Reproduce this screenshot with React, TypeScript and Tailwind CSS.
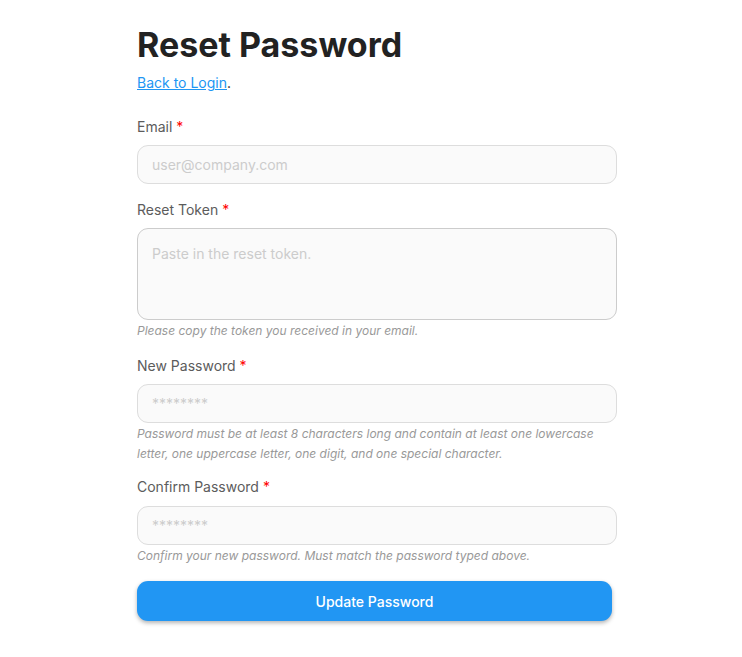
import React from "react";

function Label({ children }: { children: React.ReactNode }) {
  return (
    <label className="block text-[14px] leading-[20px] text-[#5c5c5c]">
      {children} <span className="text-[#f00]">*</span>
    </label>
  );
}

function Hint({ children }: { children: React.ReactNode }) {
  return <p className="mt-[1px] text-[12px] leading-[20px] italic text-[#999]">{children}</p>;
}

const inputCls =
  "block w-full h-[39px] rounded-[11px] border border-[#ddd] bg-[#fafafa] px-[14px] text-[14px] text-[#333] placeholder:text-[#ccc] outline-none";

export default function App() {
  return (
    <div className="min-h-[657px] bg-white font-['Inter',sans-serif]">
      <div className="w-[480px] ml-[137px] pt-[22px]">
        <h1 className="text-[34px] leading-[46px] font-bold text-[#222]">Reset Password</h1>
        <p className="mt-[5px] text-[14px] leading-[20px] text-[#222]">
          <a href="#" className="text-[#2196f3] underline">Back to Login</a>.
        </p>
        <form className="mt-[24px]" onSubmit={(e) => e.preventDefault()}>
          <Label>Email</Label>
          <input className={`${inputCls} mt-[8px]`} placeholder="user@company.com" />

          <div className="mt-[16px]">
            <Label>Reset Token</Label>
          </div>
          <textarea
            className="mt-[8px] block w-full h-[92px] resize-none rounded-[11px] border border-[#ccc] bg-[#fafafa] px-[14px] py-[15px] text-[14px] leading-[20px] text-[#333] placeholder:text-[#ccc] outline-none"
            placeholder="Paste in the reset token."
          />
          <Hint>Please copy the token you received in your email.</Hint>

          <div className="mt-[15px]">
            <Label>New Password</Label>
          </div>
          <input type="password" className={`${inputCls} mt-[8px]`} placeholder="********" />
          <Hint>
            Password must be at least 8 characters long and contain at least one lowercase letter, one uppercase letter, one digit, and one special character.
          </Hint>

          <div className="mt-[13px]">
            <Label>Confirm Password</Label>
          </div>
          <input type="password" className={`${inputCls} mt-[9px]`} placeholder="********" />
          <Hint>Confirm your new password. Must match the password typed above.</Hint>

          <button
            type="submit"
            className="mt-[15px] block w-[475px] h-[40px] rounded-[11px] bg-[#2196f3] text-white text-[14px] font-medium shadow-[0_2px_4px_rgba(0,0,0,0.3)]"
          >
            Update Password
          </button>
        </form>
      </div>
    </div>
  );
}
